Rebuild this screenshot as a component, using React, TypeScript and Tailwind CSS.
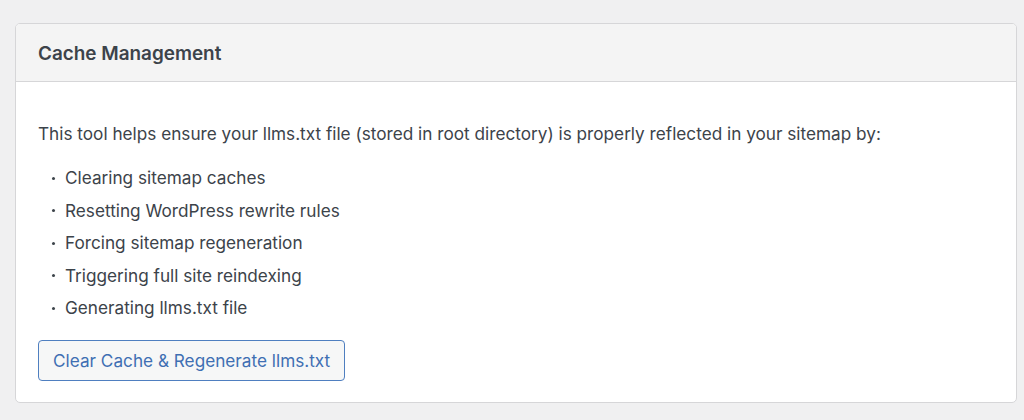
const items = [
  "Clearing sitemap caches",
  "Resetting WordPress rewrite rules",
  "Forcing sitemap regeneration",
  "Triggering full site reindexing",
  "Generating llms.txt file",
];

export default function App() {
  return (
    <div
      className="h-[420px] w-[1024px] bg-[#f0f0f1] pt-[23px] pl-[15px] pr-[7px]"
      style={{ fontFamily: "Inter, 'Noto Sans', sans-serif" }}
    >
      <div className="overflow-hidden rounded-[5px] border border-[#d6d6d8] bg-white">
        {/* header */}
        <div className="flex h-[58px] items-center border-b border-[#d6d6d8] bg-[#f4f4f4] px-[22px] pt-[3px]">
          <h2 className="text-[18.9px] font-semibold text-[#3c434a]">Cache Management</h2>
        </div>

        {/* body */}
        <div className="px-[22px] pt-[40px] pb-[21px] text-[17.2px] text-[#3c434a]">
          <p className="leading-[24px]">
            This tool helps ensure your llms.txt file (stored in root directory) is properly reflected in your sitemap by:
          </p>
          <ul className="mt-[20px] flex flex-col gap-[8.6px] pl-[14px]">
            {items.map((item) => (
              <li key={item} className="flex items-center leading-[24px]">
                <span className="mr-[10px] h-[3px] w-[3px] rounded-full bg-[#3c434a]" />
                <span>{item}</span>
              </li>
            ))}
          </ul>
          <button className="mt-[20px] h-[41px] rounded-[4px] border border-[#4f7fc0] bg-[#f6f7f7] px-[14px] text-[17.2px] text-[#3f6fb3]">
            Clear Cache &amp; Regenerate llms.txt
          </button>
        </div>
      </div>
    </div>
  );
}
